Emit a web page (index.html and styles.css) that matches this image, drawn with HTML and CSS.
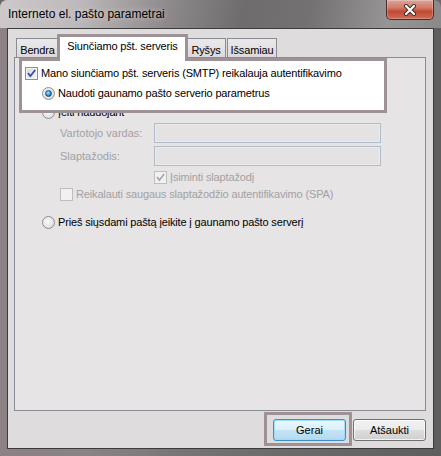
FILE: index.html
```html
<!DOCTYPE html>
<html lang="lt">
<head>
    <meta charset="UTF-8">
    <title>Interneto el. pašto parametrai</title>
    <link rel="stylesheet" href="styles.css">
</head>
<body>

<div class="window">
    <div class="titlebar">
        <span class="title">Interneto el. pašto parametrai</span>
        <span class="close">
            <svg width="14" height="12" viewBox="0 0 14 12">
                <path d="M3 2 L11 10 M11 2 L3 10" stroke="#3b2a28" stroke-width="4" stroke-linecap="round"/>
                <path d="M3 2 L11 10 M11 2 L3 10" stroke="#ffffff" stroke-width="2.2" stroke-linecap="round"/>
            </svg>
        </span>
    </div>

    <div class="client">
        <div class="tabs">
            <div class="tab tab-bendra">Bendra</div>
            <div class="tab active">Siunčiamo pšt. serveris</div>
            <div class="tab tab-rysys">Ryšys</div>
            <div class="tab tab-issamiau">Išsamiau</div>
        </div>

        <div class="panel">
            <div class="focus">
                <div class="row">
                    <span class="checkbox checked">
                        <svg width="11" height="11" viewBox="0 0 11 11"><path d="M2 5.2 L4.4 8 L9.2 2" fill="none" stroke="#3551a0" stroke-width="1.8"/></svg>
                    </span>
                    <span>Mano siunčiamo pšt. serveris (SMTP) reikalauja autentifikavimo</span>
                </div>
                <div class="row sub">
                    <span class="radio"><span class="dot"></span></span>
                    <span>Naudoti gaunamo pašto serverio parametrus</span>
                </div>
            </div>

            <div class="row under">
                <span class="radio"></span>
                <span>Įeiti naudojant</span>
            </div>

            <div class="field first">
                <span class="label">Vartotojo vardas:</span>
                <span class="input"></span>
            </div>
            <div class="field">
                <span class="label">Slaptažodis:</span>
                <span class="input"></span>
            </div>

            <div class="row remember disabled">
                <span class="checkbox checked">
                    <svg width="11" height="11" viewBox="0 0 11 11"><path d="M2 5.2 L4.4 8 L9.2 2" fill="none" stroke="#a9a9a9" stroke-width="1.8"/></svg>
                </span>
                <span>Įsiminti slaptažodį</span>
            </div>
            <div class="row spa disabled">
                <span class="checkbox"></span>
                <span>Reikalauti saugaus slaptažodžio autentifikavimo (SPA)</span>
            </div>

            <div class="row before">
                <span class="radio"></span>
                <span>Prieš siųsdami paštą įeikite į gaunamo pašto serverį</span>
            </div>
        </div>

        <div class="buttons">
            <span class="marked"><button class="btn default">Gerai</button></span>
            <button class="btn">Atšaukti</button>
        </div>
    </div>
</div>

</body>
</html>
```

FILE: styles.css
```css
* {
    margin: 0;
    padding: 0;
    box-sizing: border-box;
}

body {
    width: 441px;
    height: 456px;
    overflow: hidden;
    background: #6b6869;
    font-family: "Liberation Sans", Arial, sans-serif;
    font-size: 11px;
    letter-spacing: -0.15px;
    color: #000;
}

/* window frame */
.window {
    width: 441px;
    height: 456px;
    display: flex;
    flex-direction: column;
    padding: 0 7px 7px 7px;
    border-radius: 7px 7px 0 0;
    background: linear-gradient(to right, #8c8185 0%, #8a8285 20%, #717071 50%, #5e5e5e 100%);
}

.titlebar {
    height: 28px;
    margin: 0 -7px;
    padding: 0 7px 0 8px;
    display: flex;
    justify-content: space-between;
    align-items: flex-start;
    border-radius: 7px 7px 0 0;
    background: linear-gradient(100deg, #cdc9ca 0%, #bdb8ba 18%, #8e8a8c 38%, #6e6c6d 55%, #737172 70%, #979596 88%, #8a8889 100%);
}

.title {
    font-size: 12px;
    letter-spacing: 0;
    line-height: 28px;
    color: #000;
    text-shadow: 0 0 6px rgba(255, 255, 255, 0.6);
}

.close {
    width: 48px;
    height: 20px;
    display: flex;
    justify-content: center;
    align-items: center;
    border: 1px solid #4a2a24;
    border-top: none;
    border-radius: 0 0 5px 5px;
    background: linear-gradient(#dba79c 0%, #d27a68 40%, #c24a34 60%, #cf6a55 100%);
    box-shadow: inset 0 0 0 1px rgba(255, 255, 255, 0.25);
}

/* client area */
.client {
    flex: 1;
    display: flex;
    flex-direction: column;
    border: 1px solid #3c3b3c;
    background: #dfdcde;
    padding: 5px 7px 7px 6px;
}

.tabs {
    height: 23px;
    display: flex;
    align-items: flex-end;
    padding-left: 2px;
}

.tab {
    height: 19px;
    padding-top: 5px;
    line-height: 13px;
    text-align: center;
    border: 1px solid #898c95;
    border-bottom: none;
    background: linear-gradient(#ebe9ea, #dcdadb);
}

.tab-bendra {
    width: 43px;
    margin-right: -2px;
}

.tab-rysys {
    width: 40px;
    margin-left: -2px;
}

.tab-issamiau {
    width: 50px;
    margin-left: 1px;
}

.tab.active {
    position: relative;
    z-index: 4;
    width: 131px;
    height: 27px;
    margin-bottom: -4px;
    padding-top: 3px;
    border: 3px solid #9e9297;
    border-bottom: none;
    background: #fff;
}

.panel {
    flex: 1;
    display: flex;
    flex-direction: column;
    align-items: flex-start;
    border: 1px solid #898c95;
    background: #e6e4e5;
}

/* highlighted block */
.focus {
    position: relative;
    width: 368px;
    margin-left: 4px;
    padding: 7px 6px 12px 6px;
    background: #fff;
}

.focus::after {
    content: "";
    position: absolute;
    inset: 0;
    z-index: 3;
    border: 3px solid #9e9297;
}

.row {
    height: 16px;
    display: flex;
    align-items: center;
    gap: 3px;
    white-space: nowrap;
}

.row.sub {
    margin-top: 4px;
    margin-left: 17px;
}

.row.under {
    margin-top: -9px;
    margin-left: 27px;
}

.row.remember {
    margin-top: 3px;
    margin-left: 139px;
}

.row.spa {
    margin-top: 1px;
    margin-left: 45px;
}

.row.before {
    margin-top: 12px;
    margin-left: 27px;
}

.disabled {
    color: #a3a1a2;
}

/* controls */
.checkbox {
    width: 13px;
    height: 13px;
    flex-shrink: 0;
    display: flex;
    justify-content: center;
    align-items: center;
    border: 1px solid #8e8f8f;
    background: linear-gradient(135deg, #d6d8dc, #f7f7f7);
    box-shadow: inset 0 0 0 1px #f4f4f4;
}

.disabled .checkbox {
    border-color: #bdbdbd;
    background: #f2f1f1;
    box-shadow: none;
}

.radio {
    width: 13px;
    height: 13px;
    flex-shrink: 0;
    display: flex;
    justify-content: center;
    align-items: center;
    border: 1px solid #8e8f8f;
    border-radius: 50%;
    background: radial-gradient(circle at 40% 40%, #fbfbfb 0%, #e4e4e4 60%, #cfcfcf 100%);
}

.dot {
    width: 7px;
    height: 7px;
    border-radius: 50%;
    border: 1px solid #1a4f7e;
    background: radial-gradient(circle at 40% 35%, #b4ebff 0%, #3f9fdc 45%, #115191 100%);
}

.field {
    height: 20px;
    display: flex;
    align-items: center;
    margin-left: 45px;
    margin-top: 3px;
    color: #a3a1a2;
    letter-spacing: 0;
}

.label {
    width: 94px;
}

.input {
    width: 227px;
    height: 20px;
    border: 1px solid #b0bccb;
    background: #e4e2e3;
    box-shadow: inset 0 0 0 1px #eceaeb;
}

/* buttons */
.buttons {
    height: 22px;
    margin-top: 8px;
    display: flex;
    justify-content: flex-end;
    gap: 7px;
}

.marked {
    position: relative;
    display: flex;
}

.marked::after {
    content: "";
    position: absolute;
    inset: -7px -6px -5px -9px;
    border: 3px solid #9e9297;
}

.btn {
    width: 73px;
    height: 22px;
    font-family: "Liberation Sans", Arial, sans-serif;
    font-size: 11px;
    color: #000;
    border: 1px solid #707070;
    border-radius: 3px;
    background: linear-gradient(#f2f2f2 0%, #ebebeb 48%, #dddddd 52%, #cfcfcf 100%);
    box-shadow: inset 0 0 0 1px rgba(255, 255, 255, 0.7);
}

.btn.default {
    border-color: #3c8fc9;
    background: linear-gradient(#ebf6fc 0%, #dcf0fa 48%, #c4e4f5 52%, #b3d9ef 100%);
    box-shadow: inset 0 0 0 1px #9fdcf8;
}
```
